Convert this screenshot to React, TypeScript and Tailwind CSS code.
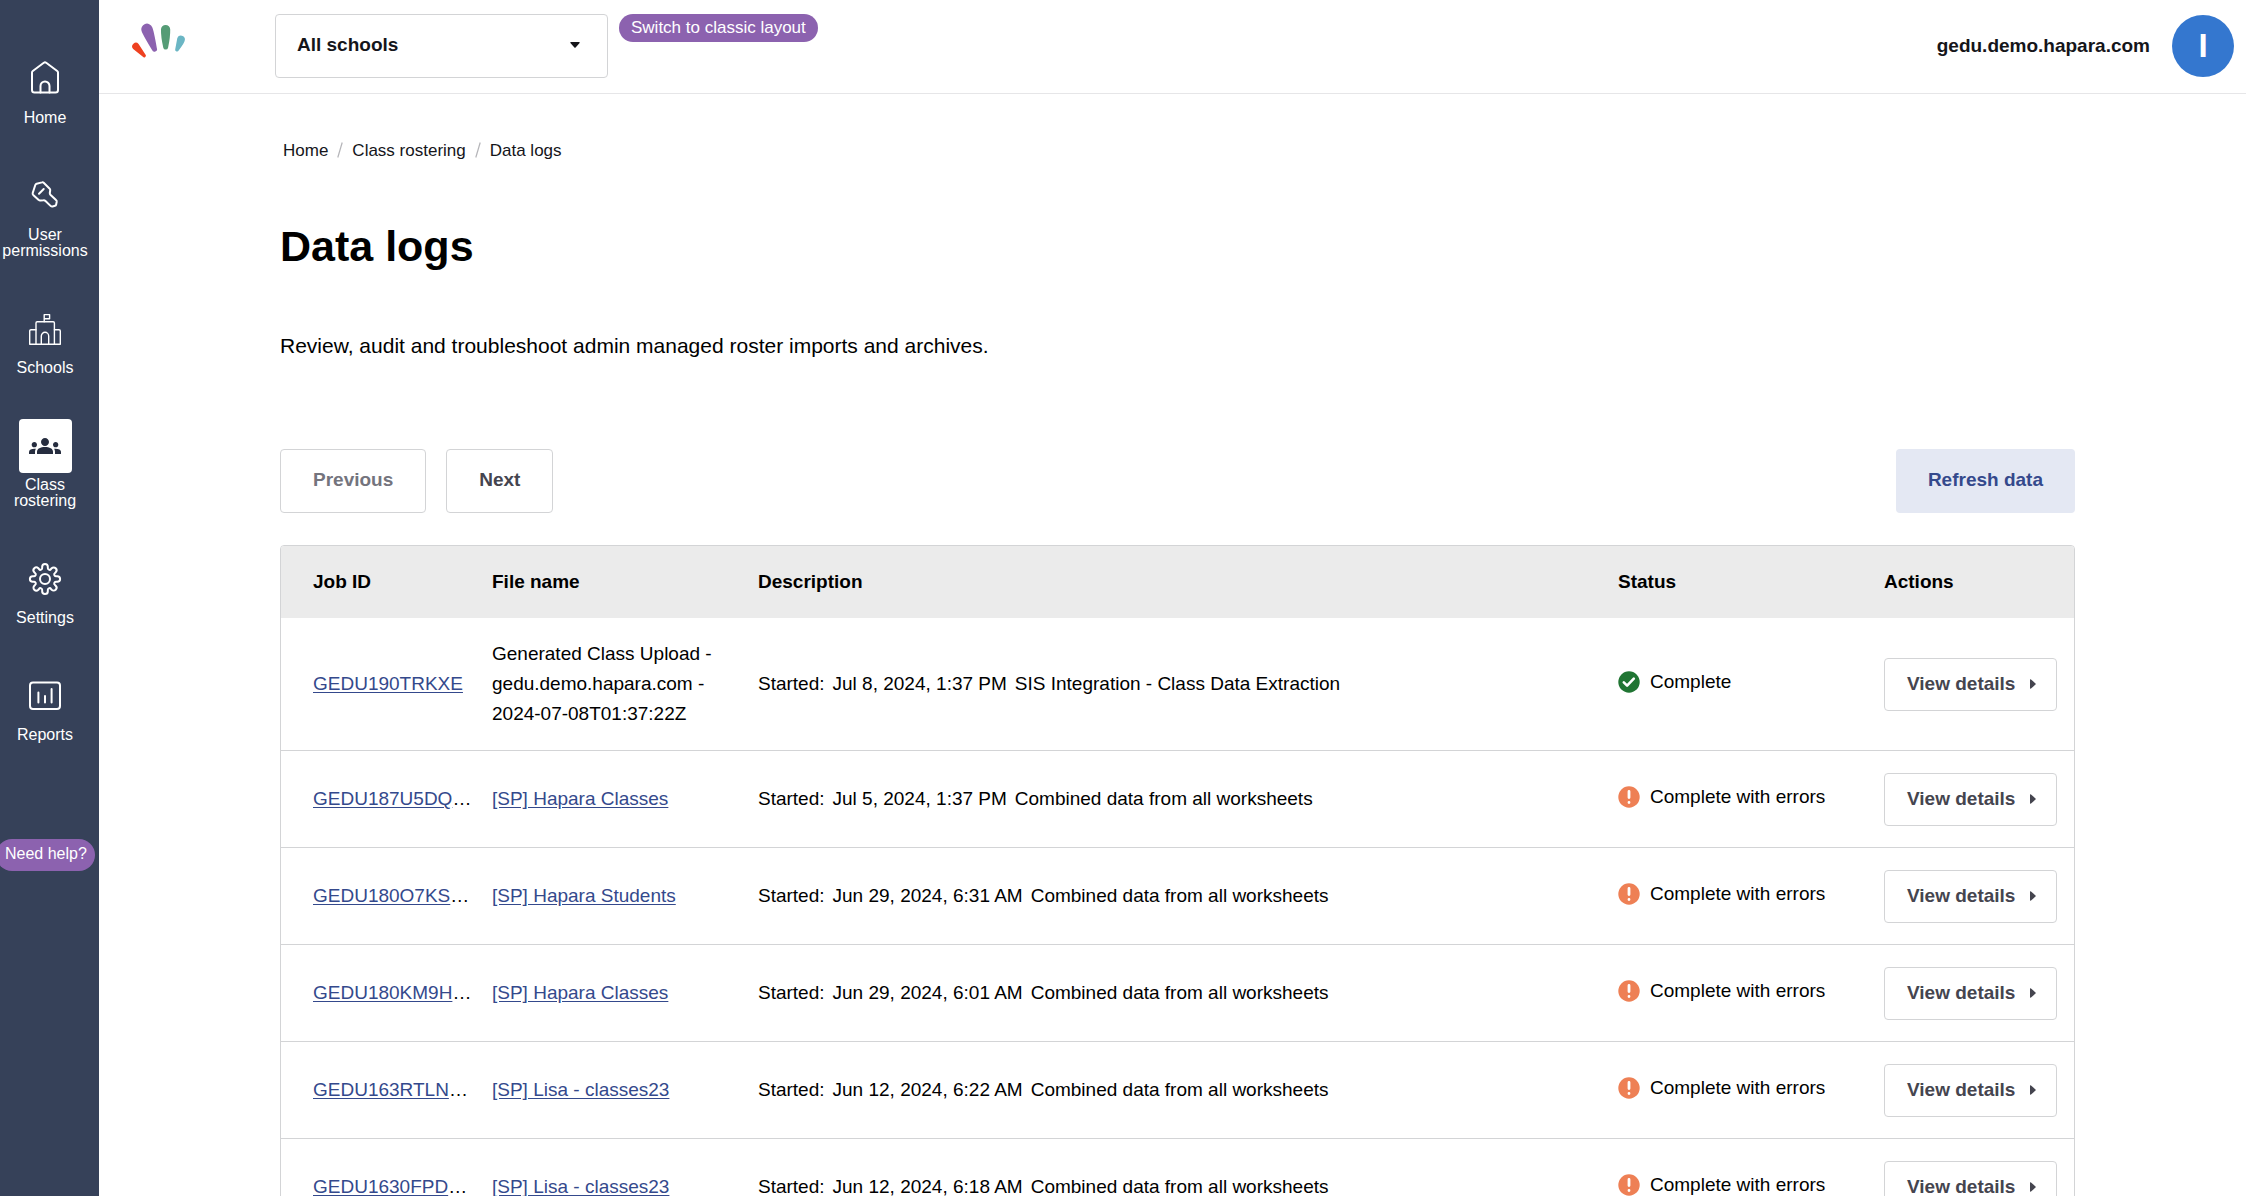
import type { ReactNode } from "react";
import { MdGroups } from "react-icons/md";

function Stroke({ width = 2, children }: { width?: number; children: ReactNode }) {
  return (
    <svg
      viewBox="0 0 32 32"
      className="size-8 overflow-visible"
      fill="none"
      stroke="currentColor"
      strokeWidth={width}
      strokeLinecap="round"
      strokeLinejoin="round"
      aria-hidden="true"
    >
      {children}
    </svg>
  );
}

function gearPath() {
  const at = (deg: number, r: number) => {
    const a = (deg * Math.PI) / 180;
    return `${(16 + r * Math.cos(a)).toFixed(2)} ${(16 + r * Math.sin(a)).toFixed(2)}`;
  };
  let d = `M${at(-13, 12.6)}`;
  for (let k = 0; k < 8; k++) {
    const t = k * 45;
    d += ` A2.8 2.8 0 0 1 ${at(t + 13, 12.6)} L${at(t + 14, 11.6)} A1.75 1.75 0 0 0 ${at(t + 31, 11.6)} L${at(t + 32, 12.6)}`;
  }
  return d + "Z";
}

const HomeIcon = () => (
  <Stroke>
    <path d="M3 9.600a2 2 0 0 1 .8-1.600L14.800-.2a2 2 0 0 1 2.400 0L28.200 8a2 2 0 0 1 .8 1.600V27a2.500 2.500 0 0 1-2.500 2.500h-21A2.500 2.500 0 0 1 3 27Z" />
    <path d="M11.500 29.500V23a4.500 4.500 0 0 1 9 0v6.500" />
  </Stroke>
);

const KeyIcon = () => (
  <Stroke>
    <path d="M6.300 5Q6.700 4 7.600 3.700L13 2.400Q14 2.100 14.700 2.800L20.700 8.800Q21.400 9.500 21.200 10.500L20.800 13Q20.700 14 21.400 14.700L27 20Q27.900 20.800 27.700 21.900L27.100 24.700Q26.900 25.600 26 25.800L23.600 26.500Q22.600 26.800 21.800 26.100L16.500 21Q15.500 20 14.500 20.200L11.500 20.500Q10.500 20.700 9.700 19.900L4.200 14.900Q3.400 14.100 3.700 13Z" />
    <path d="m10 13.700 4.700-4.700" />
  </Stroke>
);

const SchoolIcon = () => (
  <Stroke width={1.4}>
    <path d="M7 31.3V10a1.2 1.2 0 0 1 1.2-1.2h16A1.2 1.2 0 0 1 25.4 10v21.3" />
    <path d="M7 16.7H2a1.3 1.3 0 0 0-1.3 1.3v13.3h30.6V18a1.3 1.3 0 0 0-1.3-1.3h-4.6" />
    <path d="M15.2 8.8V1.6h5.4v4.2h-5.4" />
    <path d="M12.3 31.3V23a3.7 3.7 0 0 1 7.4 0v8.3" />
  </Stroke>
);

const GearIcon = () => (
  <Stroke>
    <path d={gearPath()} />
    <circle cx="16" cy="16" r="5" />
  </Stroke>
);

const ReportsIcon = () => (
  <Stroke>
    <rect x="1" y="2.500" width="30" height="26.500" rx="3" />
    <path d="M9.400 12.500V22.500M16 16V22.500M22.600 9V22.500" />
  </Stroke>
);

const NAV: { label: string; icon: ReactNode; active?: boolean }[] = [
  { label: "Home", icon: <HomeIcon /> },
  { label: "User permissions", icon: <KeyIcon /> },
  { label: "Schools", icon: <SchoolIcon /> },
  { label: "Class rostering", icon: <MdGroups className="size-8" />, active: true },
  { label: "Settings", icon: <GearIcon /> },
  { label: "Reports", icon: <ReportsIcon /> },
];

function Sidebar() {
  return (
    <aside className="flex w-[99px] shrink-0 flex-col items-start overflow-hidden bg-[#364159] pt-[52px] text-white">
      <nav className="flex w-[90px] flex-col gap-[43px]">
        {NAV.map((item) => (
          <a key={item.label} href="#" className="flex flex-col items-center gap-1 text-center text-base leading-4">
            <span
              className={
                item.active
                  ? "flex h-[54px] w-[53px] items-center justify-center rounded bg-white text-[#262d3f]"
                  : "flex h-[54px] w-[53px] items-center justify-center"
              }
            >
              {item.icon}
            </span>
            <span className="flex w-16 justify-center">
              <span>{item.label}</span>
            </span>
          </a>
        ))}
      </nav>
      <button type="button" className="mt-24 -ml-1 h-8 rounded-full bg-[#8c62af] pr-2 pb-0.5 pl-[9px] text-base whitespace-nowrap">
        Need help?
      </button>
    </aside>
  );
}

function Logo() {
  return (
    <svg viewBox="390 70 165 106" className="mt-[9px] h-[35px] w-[55px]" role="img" aria-label="Hapara">
      <path fill="#ee4120" d="M395.800 148.400A11 11 0 0 1 412.200 133.600L432.800 165.700A5 5 0 0 1 425.300 172.400Z" />
      <path fill="#8c62af" d="M421.500 95A17 17 0 0 1 453.500 83Q458 92 467.500 146.400A7.500 7.500 0 0 1 453 152Q424 104 421.500 95Z" />
      <path fill="#559c76" d="M480 90a14 14 0 0 1 28 0Q508.500 112 501.500 145a7.500 7.500 0 0 1-14.500 0Q479.500 112 480 90Z" />
      <path fill="#6bb6c4" d="M529.500 115.500A12 12 0 0 1 552.500 121Q552 130 533.500 153A5.500 5.500 0 0 1 523 150Z" />
    </svg>
  );
}

function Header() {
  return (
    <header className="flex shrink-0 items-start border-b border-[#e6e6e8] pt-3.5 pr-3 pb-[15px] pl-8">
      <Logo />
      <div className="relative ml-[89px] w-[333px]">
        <select
          aria-label="School"
          className="h-16 w-full appearance-none rounded border border-[#d3d4d6] bg-white pr-12 pb-0.5 pl-[21px] text-[19px] font-bold text-[#15151a]"
        >
          <option>All schools</option>
        </select>
        <svg viewBox="0 0 10 6" className="pointer-events-none absolute top-7 right-7 h-1.5 w-2.5" aria-hidden="true">
          <path d="M.8 0h8.400a.6.6 0 0 1 .4 1L5.600 5.500a.8.8 0 0 1-1.200 0L.4 1A.6.6 0 0 1 .8 0Z" fill="#15151a" />
        </svg>
      </div>
      <button type="button" className="ml-[11px] h-7 rounded-full bg-[#8c62af] px-3 text-[17px] leading-[26px] text-white">
        Switch to classic layout
      </button>
      <div className="ml-auto flex h-16 items-center gap-[22px]">
        <span className="text-[19px] font-bold text-[#15151a]">gedu.demo.hapara.com</span>
        <button type="button" className="flex size-[62px] items-center justify-center rounded-full bg-[#3477cf] text-[33px] font-bold text-white">
          I
        </button>
      </div>
    </header>
  );
}

type Job = { id: string; cut?: boolean; file: string; link?: boolean; started: string; text: string; ok?: boolean };

const SHEETS = "Combined data from all worksheets";
const JOBS: Job[] = [
  {
    id: "GEDU190TRKXE",
    file: "Generated Class Upload - gedu.demo.hapara.com - 2024-07-08T01:37:22Z",
    started: "Jul 8, 2024, 1:37 PM",
    text: "SIS Integration - Class Data Extraction",
    ok: true,
  },
  { id: "GEDU187U5DQ", cut: true, file: "[SP] Hapara Classes", link: true, started: "Jul 5, 2024, 1:37 PM", text: SHEETS },
  { id: "GEDU180O7KS", cut: true, file: "[SP] Hapara Students", link: true, started: "Jun 29, 2024, 6:31 AM", text: SHEETS },
  { id: "GEDU180KM9H", cut: true, file: "[SP] Hapara Classes", link: true, started: "Jun 29, 2024, 6:01 AM", text: SHEETS },
  { id: "GEDU163RTLN", cut: true, file: "[SP] Lisa - classes23", link: true, started: "Jun 12, 2024, 6:22 AM", text: SHEETS },
  { id: "GEDU1630FPD", cut: true, file: "[SP] Lisa - classes23", link: true, started: "Jun 12, 2024, 6:18 AM", text: SHEETS },
];

function StatusIcon({ ok }: { ok?: boolean }) {
  return (
    <svg viewBox="0 0 22 22" className="size-[22px] shrink-0" aria-hidden="true">
      <circle cx="11" cy="11" r="10.700" fill={ok ? "#207533" : "#ee8055"} />
      {ok ? (
        <path d="m5.800 11.400 3.300 3.200 6.700-7" fill="none" stroke="#fff" strokeWidth="2.600" strokeLinecap="round" strokeLinejoin="round" />
      ) : (
        <path d="M11 5.500v6M11 16.500v.1" fill="none" stroke="#fff" strokeWidth="2.800" strokeLinecap="round" />
      )}
    </svg>
  );
}

const LINK = "text-[#34498c] underline underline-offset-2";

function JobRow({ job }: { job: Job }) {
  return (
    <tr className="h-[97px] [&>td]:border-b [&>td]:border-[#d3d4d6] [&>td]:py-[21px]">
      <td className="pl-8 whitespace-nowrap">
        <a href="#" className={LINK}>{job.id}</a>
        {job.cut && "…"}
      </td>
      <td className="pr-4 pl-4">
        {job.link ? <a href="#" className={LINK}>{job.file}</a> : job.file}
      </td>
      <td className="pl-4">
        <div className="flex gap-2">
          <span>Started:</span>
          <span>{job.started}</span>
          <span>{job.text}</span>
        </div>
      </td>
      <td className="pl-4">
        <div className="flex items-center gap-2.5 pb-1 whitespace-nowrap">
          <StatusIcon ok={job.ok} />
          {job.ok ? "Complete" : "Complete with errors"}
        </div>
      </td>
      <td className="pl-4">
        <button
          type="button"
          className="flex h-[53px] w-[173px] items-center justify-between rounded border border-[#d3d4d6] bg-white pr-5 pl-[22px] font-bold whitespace-nowrap text-[#45454f]"
        >
          View details
          <svg viewBox="0 0 6 10" className="h-2.5 w-1.5" aria-hidden="true">
            <path d="M0 .8A.6.6 0 0 1 1 .4L5.500 4.400a.8.8 0 0 1 0 1.200L1 9.600a.6.6 0 0 1-1-.4Z" fill="#45454f" />
          </svg>
        </button>
      </td>
    </tr>
  );
}

function Slash() {
  return (
    <svg viewBox="0 0 6 16" className="mt-0.5 h-4 w-1.5" aria-hidden="true">
      <path d="M5.200.500.800 15.500" stroke="#b4b4b8" strokeWidth="1.200" />
    </svg>
  );
}

export default function App() {
  return (
    <div className="flex h-screen overflow-hidden bg-white font-['Liberation_Sans',Arial,sans-serif] text-[19px] leading-[30px] text-black">
      <Sidebar />
      <div className="flex min-w-0 flex-1 flex-col">
        <Header />
        <main className="min-h-0 flex-1 overflow-y-auto pt-[46px] pr-[171px] pl-[181px] [scrollbar-width:none]">
          <nav aria-label="Breadcrumb" className="flex gap-[9px] pl-[3px] text-[17px] leading-[22px] text-[#15151a]">
            <a href="#">Home</a>
            <Slash />
            <a href="#">Class rostering</a>
            <Slash />
            <a href="#">Data logs</a>
          </nav>
          <h1 className="mt-[58px] text-[43px] leading-[52px] font-bold">Data logs</h1>
          <p className="mt-[58px] text-[21px] leading-8">Review, audit and troubleshoot admin managed roster imports and archives.</p>
          <div className="mt-[87px] flex items-center font-bold">
            <button type="button" disabled className="h-16 rounded border border-[#d3d4d6] bg-white px-8 pb-0.5 text-[#74747d]">
              Previous
            </button>
            <button type="button" className="ml-5 h-16 rounded border border-[#d3d4d6] bg-white px-8 pb-0.5 text-[#45454f]">
              Next
            </button>
            <button type="button" className="ml-auto h-16 rounded bg-[#e4e8f3] px-8 pb-0.5 text-[#34498c]">
              Refresh data
            </button>
          </div>
          <div className="mt-8 overflow-hidden rounded border border-[#d3d4d6]">
            <table className="w-full table-fixed border-separate border-spacing-0 text-left">
              <thead className="bg-[#ebebeb]">
                <tr className="h-[72px]">
                  <th className="w-[195px] pl-8">Job ID</th>
                  <th className="w-[266px] pl-4">File name</th>
                  <th className="pl-4">Description</th>
                  <th className="w-[266px] pl-4">Status</th>
                  <th className="w-[206px] pl-4">Actions</th>
                </tr>
              </thead>
              <tbody>
                {JOBS.map((job) => (
                  <JobRow key={job.id} job={job} />
                ))}
              </tbody>
            </table>
          </div>
        </main>
      </div>
    </div>
  );
}
